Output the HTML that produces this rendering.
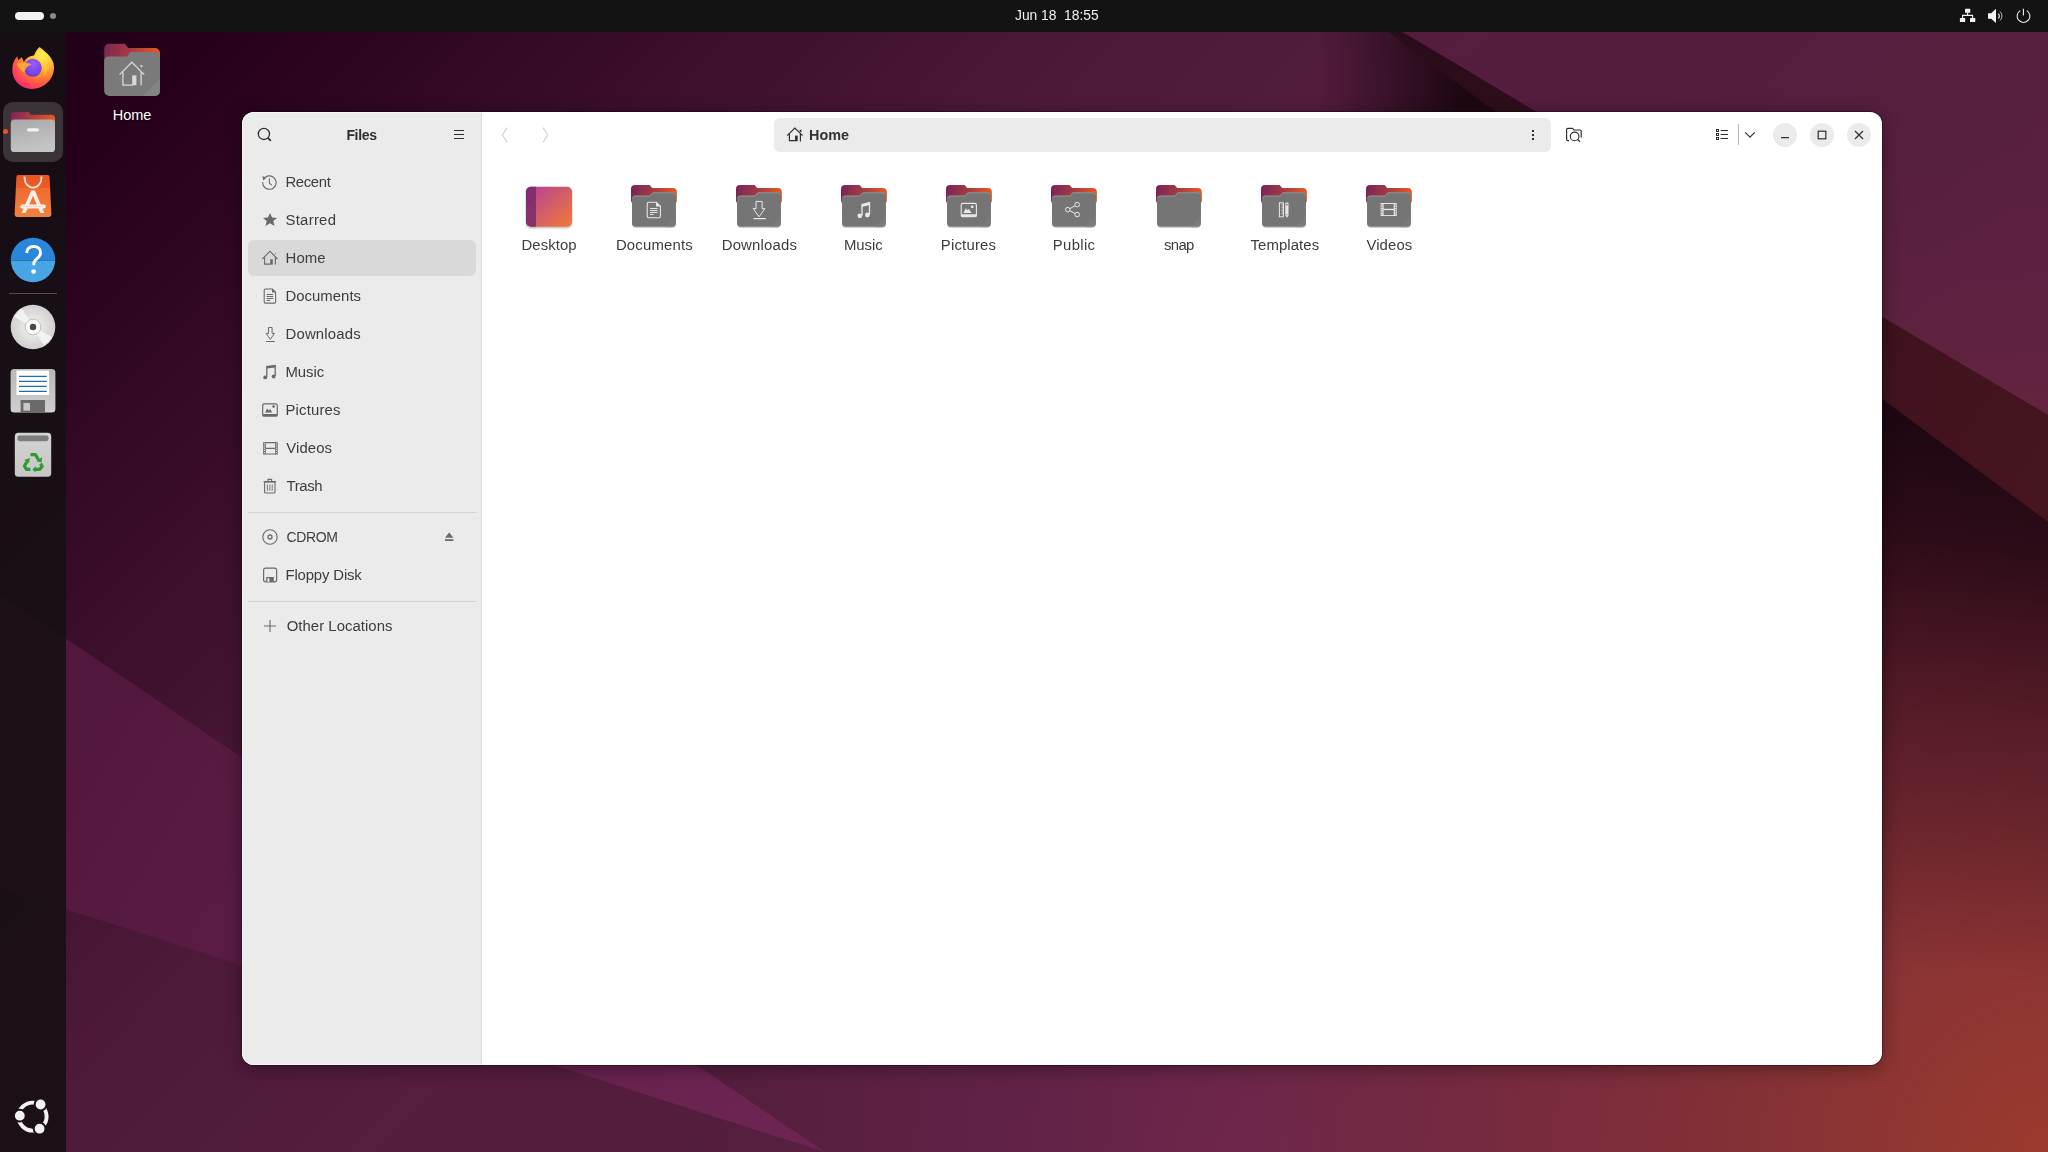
<!DOCTYPE html>
<html><head><meta charset="utf-8">
<style>
*{margin:0;padding:0;box-sizing:border-box}
html,body{width:2048px;height:1152px;overflow:hidden;background:#2a0520;font-family:"Liberation Sans",sans-serif;-webkit-font-smoothing:antialiased}
#win,#topbar{will-change:transform}
.abs{position:absolute}
#wall{position:absolute;left:0;top:0}
#topbar{position:absolute;left:0;top:0;width:2048px;height:32px;background:#131313}
#dock{position:absolute;left:0;top:32px;width:66px;height:1120px;background:rgba(22,15,21,0.9)}
#win{position:absolute;left:242px;top:112px;width:1640px;height:953px;border-radius:12px;background:#fff;overflow:hidden;
 box-shadow:0 0 0 1px rgba(0,0,0,0.3),0 3px 18px rgba(0,0,0,0.38)}
#side{position:absolute;left:0;top:0;width:240px;height:953px;background:#ebebeb;border-right:1px solid #d9d9d9}
#side .title{position:absolute;left:0;width:239px;top:124px}
.row{position:absolute;left:6px;width:228px;height:36px;border-radius:6px}
.row .ic{position:absolute;left:14px;top:10px;width:16px;height:16px}
.row .lb{position:absolute;left:37.5px;top:0;line-height:36px;font-size:14.5px;color:#3d3d3d;white-space:nowrap}
.sep{position:absolute;left:6px;width:228px;height:1px;background:#d2d2d2}
.item{position:absolute;top:0;width:105px;height:150px}
.item .lab{position:absolute;left:0;width:105px;text-align:center;top:123px;font-size:14.5px;color:#3d3d3d;line-height:20px}
.wb{width:24px;height:24px;border-radius:12px;background:#ebebeb}
.lab{width:120px;text-align:center;font-size:14.5px;color:#3d3d3d;line-height:20px;white-space:nowrap}
</style></head><body>
<svg id="wall" width="2048" height="1152" viewBox="0 0 2048 1152">
 <defs>
  <linearGradient id="g0" x1="0" y1="0" x2="1600" y2="1600" gradientUnits="userSpaceOnUse">
   <stop offset="0" stop-color="#1e0016"/>
   <stop offset="0.075" stop-color="#26001a"/>
   <stop offset="0.234" stop-color="#3c0f2c"/>
   <stop offset="0.36" stop-color="#4d1a3a"/>
   <stop offset="0.47" stop-color="#551d3e"/>
   <stop offset="0.656" stop-color="#531e3d"/>
   <stop offset="1" stop-color="#5a2140"/>
  </linearGradient>
  <radialGradient id="gred" cx="2048" cy="1152" r="1000" gradientUnits="userSpaceOnUse">
   <stop offset="0" stop-color="#9c3a2e" stop-opacity="1"/>
   <stop offset="0.25" stop-color="#9a3a30" stop-opacity="0.72"/>
   <stop offset="0.55" stop-color="#963632" stop-opacity="0.4"/>
   <stop offset="0.85" stop-color="#8a3038" stop-opacity="0.1"/>
   <stop offset="1" stop-color="#8a3038" stop-opacity="0"/>
  </radialGradient>
  <radialGradient id="gmag" cx="1250" cy="1152" r="540" gradientUnits="userSpaceOnUse">
   <stop offset="0" stop-color="#722852" stop-opacity="0.75"/>
   <stop offset="0.6" stop-color="#6e2650" stop-opacity="0.4"/>
   <stop offset="1" stop-color="#6e2650" stop-opacity="0"/>
  </radialGradient>
  <linearGradient id="gdark" x1="1960" y1="440" x2="1880" y2="960" gradientUnits="userSpaceOnUse">
   <stop offset="0" stop-color="#1a0610" stop-opacity="0.92"/>
   <stop offset="0.2" stop-color="#1e0610" stop-opacity="0.8"/>
   <stop offset="0.5" stop-color="#2a0812" stop-opacity="0.45"/>
   <stop offset="1" stop-color="#2a0810" stop-opacity="0"/>
  </linearGradient>
  <linearGradient id="gmask" x1="1320" y1="0" x2="1460" y2="0" gradientUnits="userSpaceOnUse">
   <stop offset="0" stop-color="#000"/>
   <stop offset="1" stop-color="#fff"/>
  </linearGradient>
  <mask id="mk" maskUnits="userSpaceOnUse" x="0" y="0" width="2048" height="1152">
   <rect width="2048" height="1152" fill="url(#gmask)"/>
  </mask>
  <linearGradient id="gband" x1="1400" y1="50" x2="2048" y2="470" gradientUnits="userSpaceOnUse">
   <stop offset="0" stop-color="#2a0c1a"/>
   <stop offset="1" stop-color="#46151f"/>
  </linearGradient>
  <linearGradient id="glight" x1="1700" y1="100" x2="2048" y2="420" gradientUnits="userSpaceOnUse">
   <stop offset="0" stop-color="#6a2745" stop-opacity="0"/>
   <stop offset="1" stop-color="#642542" stop-opacity="0.45"/>
  </linearGradient>
  <linearGradient id="gleft" x1="66" y1="700" x2="760" y2="1120" gradientUnits="userSpaceOnUse">
   <stop offset="0" stop-color="#52173d"/>
   <stop offset="1" stop-color="#6c2552"/>
  </linearGradient>
 </defs>
 <rect width="2048" height="1152" fill="url(#g0)"/>
 <rect width="2048" height="1152" fill="url(#gmag)"/>
 <rect width="2048" height="1152" fill="url(#gred)"/>
 <polygon points="1345,0 2048,0 2048,415" fill="url(#glight)"/>
 <polygon points="1349,0 2048,418 2048,1152 1000,1152 1000,0" fill="url(#gdark)" mask="url(#mk)"/>
 <polygon points="1344,-1 1346,-1 2048,415 2048,522" fill="url(#gband)"/>
 <polygon points="0,594 825,1152 0,888" fill="url(#gleft)"/>
</svg>
<div id="topbar">
 <div class="abs" style="left:15px;top:12px;width:29px;height:8px;border-radius:4px;background:#f2f2f2"></div>
 <div class="abs" style="left:50px;top:13px;width:6px;height:6px;border-radius:3px;background:#8a8a8a"></div>
 <div class="abs" style="left:1015px;top:7px;font-size:13.8px;color:#f2f2f2;line-height:18px;white-space:pre">Jun 18  18:55</div>
 <svg class="abs" style="left:1958px;top:7px" width="18" height="18" viewBox="0 0 18 18"><rect x="7" y="1.8" width="5.3" height="4" rx="0.6" fill="#f2f2f2"/><rect x="1.9" y="11" width="5.3" height="4" rx="0.6" fill="#f2f2f2"/><rect x="12" y="11" width="5.3" height="4" rx="0.6" fill="#f2f2f2"/><path fill="none" d="M9.6 5.6 V8.4 M4.6 11 V8.4 H14.6 V11" stroke="#f2f2f2" stroke-width="1.1"/></svg>
 <svg class="abs" style="left:1986px;top:7px" width="20" height="18" viewBox="0 0 20 18"><path d="M2.6 6.2 H5.2 L10 1.8 V16 L5.2 11.8 H2.6 A0.6 0.6 0 0 1 2 11.2 V6.8 A0.6 0.6 0 0 1 2.6 6.2Z" fill="#f2f2f2"/><path fill="none" d="M12.2 6.6 A3.4 3.4 0 0 1 12.2 11.4" stroke="#f2f2f2" stroke-width="1.1"/><path fill="none" d="M14.2 4.6 A6.4 6.4 0 0 1 14.2 13.4" stroke="#cfcfcf" stroke-width="0.9"/></svg>
 <svg class="abs" style="left:2015px;top:7px" width="18" height="18" viewBox="0 0 18 18"><path fill="none" d="M5.2 3.6 A6.4 6.4 0 1 0 11.8 3.6" stroke="#f2f2f2" stroke-width="1.1"/><path fill="none" d="M8.4 1.8 V8.6" stroke="#f2f2f2" stroke-width="1.1"/></svg>
</div>
<div id="dock">
 <svg class="abs" style="left:10px;top:13px" width="46" height="46" viewBox="0 0 46 46">
  <defs>
   <radialGradient id="ffo" cx="0.72" cy="0.2" r="1"><stop offset="0" stop-color="#fff44f"/><stop offset="0.35" stop-color="#ffb02e"/><stop offset="0.6" stop-color="#ff6a38"/><stop offset="0.85" stop-color="#ff2f6a"/><stop offset="1" stop-color="#e3137c"/></radialGradient>
   <radialGradient id="ffp" cx="0.55" cy="0.3" r="0.8"><stop offset="0" stop-color="#9b5cff"/><stop offset="0.7" stop-color="#7542e5"/><stop offset="1" stop-color="#4a3bc8"/></radialGradient>
  </defs>
  <path d="M29.6 2 C34 6 41 10 43.4 18 C46 28 40 40.5 26 43.6 C13 46 2.5 37 2.3 25 C2.2 19 4 14.6 7.3 11.2 L8.1 15.3 L11.8 12.3 L13.9 17 C16 13 20 11 24 10.6 C25.5 6.4 27.4 4 29.6 2Z" fill="url(#ffo)"/>
  <circle cx="22.8" cy="22.8" r="9" fill="url(#ffp)"/>
  <path d="M7 18.6 C11 16.8 18 17.2 21.6 19.8 C17 21 14.4 24 14.8 28 C11 25.6 8 22.6 7 18.6Z" fill="#ffb02e" opacity="0.9"/>
  <path d="M32 18 C35 22 35.5 28 33 33 C36 30 37.6 25 36 20.5Z" fill="#ffd23a" opacity="0.6"/>
 </svg>
 <div class="abs" style="left:3px;top:70px;width:60px;height:60px;border-radius:10px;background:#3b3337"></div>
 <div class="abs" style="left:3px;top:97px;width:5px;height:5px;border-radius:3px;background:#e95420"></div>
 <svg class="abs" style="left:10px;top:79px" width="46" height="42" viewBox="0 0 46 42">
  <defs><linearGradient id="gfback" x1="0" y1="0" x2="1" y2="0.3"><stop offset="0" stop-color="#7a2358"/><stop offset="1" stop-color="#ea5a22"/></linearGradient>
  <linearGradient id="gffront" x1="0" y1="0" x2="0.3" y2="1"><stop offset="0" stop-color="#a8a8a8"/><stop offset="1" stop-color="#c4c4c4"/></linearGradient></defs>
  <path d="M0.8 4.6 A3.6 3.6 0 0 1 4.4 1 H18.6 L21 3.8 H41.4 A3.6 3.6 0 0 1 45 7.4 V30 H0.8Z" fill="url(#gfback)"/>
  <path d="M0.8 12.2 A3.6 3.6 0 0 1 4.4 8.6 H41.4 A3.6 3.6 0 0 1 45 12.2 V37.4 A3.6 3.6 0 0 1 41.4 41 H4.4 A3.6 3.6 0 0 1 0.8 37.4Z" fill="url(#gffront)"/>
  <rect x="17" y="17.2" width="12" height="3.2" rx="1.6" fill="#f4f4f4"/>
 </svg>
 <svg class="abs" style="left:14px;top:142px" width="38" height="44" viewBox="0 0 38 44">
  <defs><linearGradient id="gac" x1="0" y1="0" x2="0" y2="1"><stop offset="0" stop-color="#e95420"/><stop offset="0.3" stop-color="#ec5d26"/><stop offset="0.32" stop-color="#f06c30"/><stop offset="1" stop-color="#f2813e"/></linearGradient></defs>
  <path d="M4.4 1 H33.6 A2 2 0 0 1 35.6 3 L37.4 40.6 A2.4 2.4 0 0 1 35 43 H3 A2.4 2.4 0 0 1 0.6 40.6 L2.4 3 A2 2 0 0 1 4.4 1Z" fill="url(#gac)"/>
  <path fill="none" d="M10.6 2.6 V4.2 A8.4 9.4 0 0 0 27.4 4.2 V2.6" stroke="#f6e6de" stroke-width="1.9"/>
  <path d="M17.2 16.4 H20.8 L30.4 39 H26.4 L19 21.8 L11.6 39 H7.6 Z" fill="#fdf0e8"/>
  <rect x="6.2" y="30.4" width="25.6" height="4.2" rx="2.1" fill="#fdf0e8"/><path d="M8.4 32.5 H29.6" stroke="#f7b9a4" stroke-width="0.5"/>
 </svg>
 <svg class="abs" style="left:10px;top:205px" width="46" height="46" viewBox="0 0 46 46">
  <defs><clipPath id="hc"><circle cx="23" cy="23" r="22.2"/></clipPath></defs>
  <g clip-path="url(#hc)"><rect x="0" y="0" width="46" height="23.6" fill="#2a86da"/><rect x="0" y="23.6" width="46" height="23" fill="#47a5e6"/></g>
  <path fill="none" d="M16.6 16 C17 11.6 20 9.6 23.8 9.6 C27.6 9.6 30.6 12 30.6 15.6 C30.6 19.4 27.6 20.8 25.4 23 C24.2 24.2 23.8 25.4 23.8 28.2" stroke="#ffffff" stroke-width="3"/>
  <circle cx="23.6" cy="34.6" r="2.4" fill="#ffffff"/>
 </svg>
 <div class="abs" style="left:9px;top:261px;width:48px;height:1px;background:#554d52"></div>
 <svg class="abs" style="left:10px;top:272px" width="46" height="46" viewBox="0 0 46 46">
  <defs><radialGradient id="gcd" cx="0.5" cy="0.5" r="0.5"><stop offset="0" stop-color="#f4f4f4"/><stop offset="1" stop-color="#d0d0d0"/></radialGradient></defs>
  <circle cx="23" cy="23" r="22.3" fill="url(#gcd)"/>
  <path d="M23 23 L4 13 A22 22 0 0 1 12 4.4Z" fill="#f8f8f8" opacity="0.8"/>
  <path d="M23 23 L42 33 A22 22 0 0 1 34 41.6Z" fill="#f8f8f8" opacity="0.8"/>
  <circle cx="23" cy="23" r="7.8" fill="#fafafa" stroke="#b79f7e" stroke-width="0.6"/>
  <circle cx="23" cy="23" r="3.2" fill="#4a4a4a"/>
 </svg>
 <svg class="abs" style="left:10px;top:336px" width="46" height="46" viewBox="0 0 46 46">
  <defs><linearGradient id="gfl" x1="0" y1="0" x2="0" y2="1"><stop offset="0" stop-color="#b8b8b8"/><stop offset="1" stop-color="#cfcfcf"/></linearGradient></defs>
  <path d="M4.2 1 H41.8 A3.6 3.6 0 0 1 45.4 4.6 V41 A3.6 3.6 0 0 1 41.8 44.6 H4.2 A3.6 3.6 0 0 1 0.6 41 V4.6 A3.6 3.6 0 0 1 4.2 1Z" fill="url(#gfl)"/>
  <rect x="6.5" y="2.6" width="32.6" height="24.4" fill="#ffffff"/>
  <path fill="none" d="M9 8.4h27.8M9 13.4h27.8M9 18.4h27.8M9 23.4h27.8" stroke="#1f6fae" stroke-width="1.1"/>
  <rect x="10.6" y="32" width="24.4" height="12.6" fill="#6a6a6a"/>
  <rect x="13.4" y="35" width="6.6" height="7.6" fill="#c8c8c8"/>
 </svg>
 <svg class="abs" style="left:14px;top:400px" width="38" height="46" viewBox="0 0 38 46">
  <defs><linearGradient id="gtr" x1="0" y1="0" x2="0" y2="1"><stop offset="0" stop-color="#d4d4d4"/><stop offset="1" stop-color="#c6c6c6"/></linearGradient></defs>
  <rect x="0.8" y="0.8" width="36.4" height="44" rx="3.6" fill="url(#gtr)"/>
  <rect x="3.4" y="3.6" width="31.2" height="5.6" rx="2.4" fill="#7d7d7d"/>
  <g fill="none" stroke="#2f9a2f" stroke-width="3.2" stroke-linejoin="round"><path d="M16.6 22.6 L21.4 22.6 L24.6 28" /><path d="M26.6 31.4 L28.2 34.4 L25.6 37.4 L20.6 37.4"/><path d="M16.4 37.4 L12.4 37.4 L10.4 34 L13 29.6"/></g>
  <g fill="#2f9a2f"><path d="M22.4 29.4 L27.6 30.2 L28.2 25Z"/><path d="M21.6 34.2 L18.4 37.4 L21.6 40.6Z"/><path d="M10.4 28 L15 31 L15.8 26Z"/></g>
 </svg>
 <svg class="abs" style="left:0px;top:1054px" width="66" height="60" viewBox="0 0 66 60">
  <circle cx="32.6" cy="30.6" r="14" fill="none" stroke="#f2f2f2" stroke-width="3.9"/>
  <circle cx="19.8" cy="29.7" r="5.9" fill="#f2f2f2" stroke="#1c1218" stroke-width="2"/>
  <circle cx="40.6" cy="18.5" r="5.9" fill="#f2f2f2" stroke="#1c1218" stroke-width="2"/>
  <circle cx="39.6" cy="42.7" r="5.9" fill="#f2f2f2" stroke="#1c1218" stroke-width="2"/>
 </svg>
</div>
<div class="abs" style="left:103px;top:43px;width:58px;height:54px">
 <svg width="58" height="54" viewBox="0 0 58 54">
  <defs><linearGradient id="ghback" x1="0" y1="0" x2="56" y2="14" gradientUnits="userSpaceOnUse"><stop offset="0" stop-color="#7a2452"/><stop offset="0.5" stop-color="#a63b42"/><stop offset="1" stop-color="#ea5a22"/></linearGradient></defs>
  <path d="M1.2 5.8 A5 5 0 0 1 6.2 0.8 H22 L25.2 5 H52 A5 5 0 0 1 57 10 V45 H1.2Z" fill="url(#ghback)"/>
  <path d="M1.2 17.6 A4.2 4.2 0 0 1 5.4 13.4 H24 L27.4 9 H52.8 A4.2 4.2 0 0 1 57 13.2 V48 A5 5 0 0 1 52 53 H6.2 A5 5 0 0 1 1.2 48Z" fill="#7a7a7a"/>
  <path d="M57 35 V48 A5 5 0 0 1 52 53 H40Z" fill="#888" opacity="0.7"/>
  <path fill="none" d="M16.6 31.6 L28.8 19.2 L41.2 31.6" stroke="#d8d8d8" stroke-width="1.3"/>
  <path fill="none" d="M19.9 28.4 V42.2 H30 M38.1 28.8 V42.6" stroke="#d8d8d8" stroke-width="1.3"/>
  <rect x="29.2" y="32.4" width="4.2" height="9.8" fill="#d8d8d8"/>
  <path d="M36.6 22.6 L39.6 22 L39 25Z" fill="#d8d8d8"/>
 </svg>
</div>
<div class="abs" style="left:72px;top:105px;width:120px;text-align:center;font-size:14.5px;line-height:20px;color:#fff;text-shadow:0 1px 2px rgba(0,0,0,0.8)">Home</div>
<div id="win">
<svg width="0" height="0" style="position:absolute"><defs>
 <linearGradient id="gback" x1="0" y1="0" x2="46" y2="12" gradientUnits="userSpaceOnUse"><stop offset="0" stop-color="#74235a"/><stop offset="0.5" stop-color="#a53a42"/><stop offset="1" stop-color="#ea5a22"/></linearGradient>
 <filter id="fsh2" x="-20%" y="-20%" width="140%" height="150%"><feDropShadow dx="0" dy="1" stdDeviation="0.7" flood-color="#000" flood-opacity="0.4"/></filter>
 <g id="fold"><g filter="url(#fsh2)">
  <path d="M1 5 A4 4 0 0 1 5 1 H19.6 L22.2 4.1 H42.8 A4 4 0 0 1 46.8 8.1 V17.5 H1Z" fill="url(#gback)"/>
  <path d="M2 15 A3.4 3.4 0 0 1 5.4 11.6 H19.8 L22.7 8.3 H42.5 A3.4 3.4 0 0 1 45.9 11.7 V38.5 A4 4 0 0 1 41.9 42.5 H6 A4 4 0 0 1 2 38.5Z" fill="#747474"/>
  <path d="M45.9 31.5 V38.5 A4 4 0 0 1 41.9 42.5 H35.5Z" fill="#808080" opacity="0.5"/>
  <path fill="none" d="M2.5 14.2 A3 3 0 0 1 5.4 12.1 H20 L22.9 8.8 H42.5 A3 3 0 0 1 45.4 10.8" stroke="#90999a" stroke-width="0.9"/>
 </g></g>
</defs></svg>
 <div id="content" class="abs" style="left:0;top:0;width:1640px;height:953px">
 <svg class="abs" style="left:258px;top:14px" width="10" height="18" viewBox="0 0 10 18"><path fill="none" d="M7.2 1.6 L2.4 9 L7.2 16.4" stroke="#d2d2d2" stroke-width="1.1"/></svg>
 <svg class="abs" style="left:299px;top:14px" width="10" height="18" viewBox="0 0 10 18"><path fill="none" d="M2 1.6 L6.8 9 L2 16.4" stroke="#d2d2d2" stroke-width="1.1"/></svg>
 <div class="abs" style="left:532px;top:6px;width:777px;height:34px;border-radius:6px;background:#ebebeb"></div>
 <svg class="abs" style="left:544px;top:15px" width="18" height="16" viewBox="0 0 18 16"><path fill="none" d="M1.2 8.6 L8.8 1 L16.6 8.6" stroke="#2e2e2e" stroke-width="1.15"/><path fill="none" d="M3.4 6.6 V13.6 H9.6 M14.4 6.8 V14.4" stroke="#2e2e2e" stroke-width="1.15"/><rect x="9.1" y="8.6" width="2.6" height="5.6" fill="#2e2e2e"/><path d="M13 3.8 L15.4 2.2 L15.4 5.4Z" fill="#2e2e2e"/></svg>
 <div class="abs" style="left:567px;top:13px;font-weight:bold;font-size:14.4px;color:#333;line-height:20px">Home</div>
 <svg class="abs" style="left:1289px;top:17px" width="4" height="12" viewBox="0 0 4 12"><rect x="1" y="1" width="2" height="2" fill="#2e2e2e"/><rect x="1" y="5" width="2" height="2" fill="#2e2e2e"/><rect x="1" y="9" width="2" height="2" fill="#2e2e2e"/></svg>
 <svg class="abs" style="left:1323px;top:15px" width="18" height="18" viewBox="0 0 18 18"><path fill="none" d="M4.2 13.6 H3 A1.4 1.4 0 0 1 1.6 12.2 V2.6 A1.2 1.2 0 0 1 2.8 1.4 H7.4 L9 3 H15 A1.2 1.2 0 0 1 16.2 4.2 V10.4" stroke="#2e2e2e" stroke-width="1.15"/><circle cx="9.6" cy="9.4" r="4.3" fill="none" stroke="#2e2e2e" stroke-width="1.15"/><path fill="none" d="M12.6 12.4 L15 14.8" stroke="#2e2e2e" stroke-width="1.3"/></svg>
 <svg class="abs" style="left:1473px;top:16px" width="14" height="14" viewBox="0 0 14 14"><rect x="1.5" y="1.5" width="2" height="2" fill="none" stroke="#2e2e2e" stroke-width="1"/><rect x="1.5" y="5.5" width="2" height="2" fill="none" stroke="#2e2e2e" stroke-width="1"/><rect x="1.5" y="9.5" width="2" height="2" fill="none" stroke="#2e2e2e" stroke-width="1"/><path fill="none" d="M5.6 2.5 H13 M5.6 6.5 H13 M5.6 10.5 H13" stroke="#2e2e2e" stroke-width="1"/></svg>
 <div class="abs" style="left:1496px;top:12px;width:1px;height:21px;background:#b8b8b8"></div>
 <svg class="abs" style="left:1502px;top:19px" width="12" height="8" viewBox="0 0 12 8"><path fill="none" d="M1.2 1.4 L6 6.2 L10.8 1.4" stroke="#2e2e2e" stroke-width="1.1"/></svg>
 <div class="abs wb" style="left:1531px;top:11px"><svg width="24" height="24" viewBox="0 0 24 24"><path fill="none" d="M8 14.7 H16" stroke="#2e2e2e" stroke-width="1.2"/></svg></div>
 <div class="abs wb" style="left:1568px;top:11px"><svg width="24" height="24" viewBox="0 0 24 24"><rect x="8.2" y="8.2" width="7.6" height="7.6" fill="none" stroke="#2e2e2e" stroke-width="1.2"/></svg></div>
 <div class="abs wb" style="left:1605px;top:11px"><svg width="24" height="24" viewBox="0 0 24 24"><path fill="none" d="M8 8 L16 16 M16 8 L8 16" stroke="#2e2e2e" stroke-width="1.2"/></svg></div>
 <div class="abs" style="left:283px;top:72px;width:48px;height:46px"><svg width="48" height="46" viewBox="0 0 48 46"><defs><linearGradient id="gdesk" x1="0" y1="0" x2="1" y2="1"><stop offset="0" stop-color="#b23f9c"/><stop offset="0.45" stop-color="#cf5a6c"/><stop offset="1" stop-color="#f27a38"/></linearGradient><filter id="fsh" x="-20%" y="-20%" width="140%" height="150%"><feDropShadow dx="0" dy="1" stdDeviation="0.8" flood-color="#000" flood-opacity="0.35"/></filter></defs><g filter="url(#fsh)"><rect x="1" y="2.8" width="46" height="40" rx="5" fill="url(#gdesk)"/><path d="M6 2.8 H11 V42.8 H6 A5 5 0 0 1 1 37.8 V7.8 A5 5 0 0 1 6 2.8Z" fill="#7a2a6a" opacity="0.85"/></g></svg></div><div class="abs lab" style="left:247.10px;top:123.4px;font-size:14.9px;letter-spacing:0.087px">Desktop</div>
 <div class="abs" style="left:388px;top:72px;width:48px;height:46px"><svg width="48" height="46" viewBox="0 0 48 46"><use href="#fold"/><g transform="translate(1 1.2)"><path fill="none" d="M17.2 17 H25.4 L29.4 21 V31 A1.6 1.6 0 0 1 27.8 32.6 H17.8 A1.6 1.6 0 0 1 16.2 31 V18.6 A1.6 1.6 0 0 1 17.8 17Z" stroke="#e8e8e8" stroke-width="1.1"/><path d="M25 16.8 L29.6 21.4 H25Z" fill="#e8e8e8"/><path fill="none" d="M19 23.3h7.6M19 25.3h7.6M19 27.3h7.6M19 29.3h3.6" stroke="#e8e8e8" stroke-width="1"/></g></svg></div><div class="abs lab" style="left:352.40px;top:123.4px;font-size:14.9px;letter-spacing:0.189px">Documents</div>
 <div class="abs" style="left:493px;top:72px;width:48px;height:46px"><svg width="48" height="46" viewBox="0 0 48 46"><use href="#fold"/><g transform="translate(1 1.2)"><path fill="none" d="M20 16.2 H26.1 V23.4 H28.9 L23.05 31.6 L17.2 23.4 H20Z" stroke="#e8e8e8" stroke-width="1"/><path fill="none" d="M17.5 33.4 H29.8" stroke="#e8e8e8" stroke-width="1.1"/></g></svg></div><div class="abs lab" style="left:457.40px;top:123.4px;font-size:14.9px;letter-spacing:0.189px">Downloads</div>
 <div class="abs" style="left:598px;top:72px;width:48px;height:46px"><svg width="48" height="46" viewBox="0 0 48 46"><use href="#fold"/><g transform="translate(1 1.2)"><path fill="none" d="M21 30.4 V19.2 L28.5 17.3 V29.2" stroke="#e8e8e8" stroke-width="1.3"/><path d="M21 19.2 L28.5 17.3 V19.8 L21 21.7Z" fill="#e8e8e8"/><circle cx="18.8" cy="30.6" r="2.4" fill="#e8e8e8"/><circle cx="26.4" cy="29.8" r="2.4" fill="#e8e8e8"/></g></svg></div><div class="abs lab" style="left:561.30px;top:123.4px;font-size:14.9px;letter-spacing:-0.040px">Music</div>
 <div class="abs" style="left:703px;top:72px;width:48px;height:46px"><svg width="48" height="46" viewBox="0 0 48 46"><use href="#fold"/><g transform="translate(1 1.2)"><rect x="15.2" y="18.2" width="15.2" height="13.4" rx="1.6" fill="none" stroke="#e8e8e8" stroke-width="1.1"/><rect x="15" y="29" width="15.6" height="2.8" rx="1" fill="#e8e8e8"/><path d="M17.4 27.9 L19.8 23 L21.4 25 L22.8 23.8 L25.8 27.9Z" fill="#e8e8e8"/><circle cx="26.2" cy="21.6" r="1.4" fill="#e8e8e8"/></g></svg></div><div class="abs lab" style="left:666.50px;top:123.4px;font-size:14.9px;letter-spacing:0.200px">Pictures</div>
 <div class="abs" style="left:808px;top:72px;width:48px;height:46px"><svg width="48" height="46" viewBox="0 0 48 46"><use href="#fold"/><g transform="translate(1 1.2)"><circle cx="16.8" cy="24.5" r="2.3" fill="none" stroke="#e8e8e8" stroke-width="1"/><circle cx="26.2" cy="19.4" r="2.3" fill="none" stroke="#e8e8e8" stroke-width="1"/><circle cx="26.2" cy="29.4" r="2.3" fill="none" stroke="#e8e8e8" stroke-width="1"/><path fill="none" d="M18.8 23.4 L24.2 20.5 M18.8 25.6 L24.2 28.3" stroke="#e8e8e8" stroke-width="1"/></g></svg></div><div class="abs lab" style="left:772.10px;top:123.4px;font-size:14.9px;letter-spacing:0.317px">Public</div>
 <div class="abs" style="left:913px;top:72px;width:48px;height:46px"><svg width="48" height="46" viewBox="0 0 48 46"><use href="#fold"/><g transform="translate(1 1.2)"></g></svg></div><div class="abs lab" style="left:876.80px;top:123.4px;font-size:14.9px;letter-spacing:-0.675px">snap</div>
 <div class="abs" style="left:1018px;top:72px;width:48px;height:46px"><svg width="48" height="46" viewBox="0 0 48 46"><use href="#fold"/><g transform="translate(1 1.2)"><rect x="18.4" y="17.6" width="4" height="14" fill="none" stroke="#e8e8e8" stroke-width="1"/><path fill="none" d="M20.4 19.5h2M21.2 21h1.2M20.4 22.5h2M21.2 24h1.2M20.4 25.5h2M21.2 27h1.2M20.4 28.5h2" stroke="#e8e8e8" stroke-width="0.7"/><path d="M24.3 18.6 A1.3 1.3 0 0 1 25.6 17.3 H26.2 A1.3 1.3 0 0 1 27.5 18.6 V30.2 L25.9 32.6 L24.3 30.2Z" fill="#e8e8e8"/><rect x="25.2" y="18.6" width="1.4" height="1.6" fill="#737373"/><path d="M24.6 29.6 H27.2" stroke="#8a8a8a" stroke-width="0.6"/></g></svg></div><div class="abs lab" style="left:982.90px;top:123.4px;font-size:14.9px;letter-spacing:0.078px">Templates</div>
 <div class="abs" style="left:1123px;top:72px;width:48px;height:46px"><svg width="48" height="46" viewBox="0 0 48 46"><use href="#fold"/><g transform="translate(1 1.2)"><path d="M14.6 17.8 H30.7 V30.9 H14.6Z" fill="#e8e8e8"/><rect x="17.6" y="18.8" width="10.1" height="4.8" fill="#747474"/><rect x="17.6" y="24.9" width="10.1" height="5" fill="#747474"/><path d="M15.9 19.4v1.2M15.9 21.6v1.2M15.9 23.8v1.2M15.9 26v1.2M15.9 28.2v1.2M29.4 19.4v1.2M29.4 21.6v1.2M29.4 23.8v1.2M29.4 26v1.2M29.4 28.2v1.2" stroke="#747474" stroke-width="1.1"/></g></svg></div><div class="abs lab" style="left:1087.40px;top:123.4px;font-size:14.9px;letter-spacing:0.116px">Videos</div>
 </div>
 <div id="side">
  <svg class="abs" style="left:14px;top:14px" width="16" height="16" viewBox="0 0 16 16"><circle cx="7.9" cy="7.9" r="5.6" fill="none" stroke="#2e2e2e" stroke-width="1.3"/><path fill="none" d="M11.9 11.9 L14.8 14.8" stroke="#2e2e2e" stroke-width="1.8"/></svg>
  <div class="abs" style="left:0;width:239px;top:112px;"></div>
  <div class="abs" style="left:0;top:13px;width:239px;text-align:center;font-weight:bold;font-size:14px;letter-spacing:-0.35px;color:#2e2e2e;line-height:20px">Files</div>
  <svg class="abs" style="left:211px;top:16px" width="12" height="12" viewBox="0 0 12 12"><path fill="none" d="M1 2.5h10M1 6.5h10M1 10.5h10" stroke="#2e2e2e" stroke-width="1.2"/></svg>
  <div class="row" style="top:52px;"><svg class="ic" width="16" height="16" viewBox="0 0 16 16"><path fill="none" d="M3.4 3.2 A6.7 6.7 0 1 1 0.7 8" stroke="#6a6a6a" stroke-width="1.1"/><path d="M0.3 2.2 L4.6 3.4 L1.2 6.6Z" fill="#6a6a6a"/><path fill="none" d="M7.4 4.4 V9.2 L9.8 11.2" stroke="#6a6a6a" stroke-width="1.1"/></svg><div class="lb" style="font-size:14.9px;margin-left:0.00px;letter-spacing:-0.380px">Recent</div></div>
  <div class="row" style="top:90px;"><svg class="ic" width="16" height="16" viewBox="0 0 16 16"><path d="M8 0.9 L10.1 5.6 L15 5.9 L11.3 9.1 L12.5 14 L8 11.3 L3.5 14 L4.7 9.1 L1 5.9 L5.9 5.6 Z" fill="#6a6a6a"/></svg><div class="lb" style="font-size:14.9px;margin-left:0.00px;letter-spacing:0.267px">Starred</div></div>
  <div class="row" style="top:128px;background:#d9d9d9;"><svg class="ic" width="16" height="16" viewBox="0 0 16 16"><path d="M0.3 9 L7.9 1.2 L15.5 9" fill="none" stroke="#6a6a6a" stroke-width="1.1"/><path d="M2.6 7.2 V14.1 H8.5 M13.4 7.4 V14.6" fill="none" stroke="#6a6a6a" stroke-width="1.1"/><rect x="8.2" y="9.2" width="2.6" height="5.4" fill="#6a6a6a"/><path d="M12.6 3.4 L14 3 L13.6 4.6Z" fill="#6a6a6a"/></svg><div class="lb" style="font-size:14.9px;margin-left:0.00px;letter-spacing:0.134px">Home</div></div>
  <div class="row" style="top:166px;"><svg class="ic" width="16" height="16" viewBox="0 0 16 16"><path d="M3.2 1 H10.5 L13.6 4.2 V14.1 A1 1 0 0 1 12.6 15.1 H3.2 A1 1 0 0 1 2.2 14.1 V2 A1 1 0 0 1 3.2 1Z" fill="none" stroke="#6a6a6a" stroke-width="1.1"/><path d="M10 0.8 L13.8 4.6 H10Z" fill="#6a6a6a"/><path fill="none" d="M4.6 6.5h6.6M4.6 8.5h6.6M4.6 10.5h6.6M4.6 12.5h3.6" stroke="#6a6a6a" stroke-width="1"/></svg><div class="lb" style="font-size:14.9px;margin-left:0.00px;letter-spacing:0.025px">Documents</div></div>
  <div class="row" style="top:204px;"><svg class="ic" width="16" height="16" viewBox="0 0 16 16"><path d="M6.5 1.5 H10.1 V7.4 H12.4 L8.3 13.4 L4.2 7.4 H6.5Z" fill="none" stroke="#6a6a6a" stroke-width="1"/><path fill="none" d="M3.9 15.5 H12.8" stroke="#6a6a6a" stroke-width="1"/></svg><div class="lb" style="font-size:14.9px;margin-left:0.00px;letter-spacing:0.189px">Downloads</div></div>
  <div class="row" style="top:242px;"><svg class="ic" width="16" height="16" viewBox="0 0 16 16"><path d="M4.8 13 V2.6 L13.2 1.6 V12" fill="none" stroke="#6a6a6a" stroke-width="1.3"/><path d="M4.8 2.6 L13.2 1.6 V3.6 L4.8 4.6Z" fill="#6a6a6a"/><circle cx="3.2" cy="13.4" r="1.9" fill="#6a6a6a"/><circle cx="11.6" cy="12.5" r="1.9" fill="#6a6a6a"/></svg><div class="lb" style="font-size:14.9px;margin-left:0.00px;letter-spacing:-0.075px">Music</div></div>
  <div class="row" style="top:280px;"><svg class="ic" width="16" height="16" viewBox="0 0 16 16"><rect x="0.7" y="1.8" width="14.6" height="12.2" rx="1.6" fill="none" stroke="#6a6a6a" stroke-width="1.2"/><rect x="0.7" y="12" width="14.6" height="2.4" rx="1" fill="#6a6a6a"/><path d="M3 10.6 L5.2 6.4 L6.8 8.4 L8.2 6.9 L10.2 10.6Z" fill="#6a6a6a"/><circle cx="11.6" cy="4.6" r="1.3" fill="#6a6a6a"/></svg><div class="lb" style="font-size:14.9px;margin-left:0.00px;letter-spacing:0.171px">Pictures</div></div>
  <div class="row" style="top:318px;"><svg class="ic" width="16" height="16" viewBox="0 0 16 16"><rect x="1.2" y="2.1" width="2.6" height="12.5" fill="#6a6a6a"/><rect x="13.1" y="2.1" width="2.6" height="12.5" fill="#6a6a6a"/><path fill="none" d="M3.8 2.65 H13.1 M3.8 8.35 H13.1 M3.8 14.05 H13.1" stroke="#6a6a6a" stroke-width="1.1"/><rect x="2" y="3.3" width="1" height="1.1" fill="#ebebeb"/><rect x="13.9" y="3.3" width="1" height="1.1" fill="#ebebeb"/><rect x="2" y="5.5" width="1" height="1.1" fill="#ebebeb"/><rect x="13.9" y="5.5" width="1" height="1.1" fill="#ebebeb"/><rect x="2" y="7.7" width="1" height="1.1" fill="#ebebeb"/><rect x="13.9" y="7.7" width="1" height="1.1" fill="#ebebeb"/><rect x="2" y="9.9" width="1" height="1.1" fill="#ebebeb"/><rect x="13.9" y="9.9" width="1" height="1.1" fill="#ebebeb"/><rect x="2" y="12.1" width="1" height="1.1" fill="#ebebeb"/><rect x="13.9" y="12.1" width="1" height="1.1" fill="#ebebeb"/></svg><div class="lb" style="font-size:14.9px;margin-left:0.80px;letter-spacing:0.080px">Videos</div></div>
  <div class="row" style="top:356px;"><svg class="ic" width="16" height="16" viewBox="0 0 16 16"><rect x="2.6" y="4" width="10.4" height="11" rx="1" fill="none" stroke="#6a6a6a" stroke-width="1.1"/><path d="M1.6 3.6 H14 M6 3.6 V1.4 H9.6 V3.6" fill="none" stroke="#6a6a6a" stroke-width="1.1"/><path fill="none" d="M5.4 6.4 V12.8 M7.8 6.4 V12.8 M10.2 6.4 V12.8" stroke="#6a6a6a" stroke-width="0.9"/></svg><div class="lb" style="font-size:14.9px;margin-left:1.00px;letter-spacing:-0.350px">Trash</div></div>
  <div class="sep" style="top:400px"></div>
  <div class="row" style="top:407px;"><svg class="ic" width="16" height="16" viewBox="0 0 16 16"><circle cx="8" cy="8" r="7.2" fill="none" stroke="#6a6a6a" stroke-width="1.1"/><circle cx="8" cy="8" r="2" fill="none" stroke="#6a6a6a" stroke-width="1.3"/></svg><div class="lb" style="font-size:14px;margin-left:1.00px;letter-spacing:-0.37px">CDROM</div><svg class="abs" style="left:196.5px;top:13px" width="9" height="10" viewBox="0 0 9 10"><path d="M4.2 0.4 L8.4 5.8 H0Z" fill="#6a6a6a"/><rect x="0" y="7.2" width="8.4" height="1.8" fill="#6a6a6a"/></svg></div>
  <div class="row" style="top:445px;"><svg class="ic" width="16" height="16" viewBox="0 0 16 16"><rect x="1.6" y="1.2" width="13" height="13.6" rx="2" fill="none" stroke="#6a6a6a" stroke-width="1.2"/><path d="M4.2 14.8 V10 H11.8 V14.8" fill="#6a6a6a"/><rect x="5.4" y="11.2" width="2" height="3.6" fill="#ebebeb"/></svg><div class="lb" style="font-size:14.9px;margin-left:0.00px;letter-spacing:-0.150px">Floppy Disk</div></div>
  <div class="sep" style="top:489px"></div>
  <div class="row" style="top:496px;"><svg class="ic" width="16" height="16" viewBox="0 0 16 16"><path fill="none" d="M8 2 V14 M2 8 H14" stroke="#6a6a6a" stroke-width="1.1"/></svg><div class="lb" style="font-size:14.9px;margin-left:1.20px;letter-spacing:0.043px">Other Locations</div></div>
</div>
<div class="abs" style="left:0;top:0;width:1640px;height:953px;border-radius:12px;box-shadow:inset 0 0 0 1px rgba(255,255,255,0.55);pointer-events:none"></div>
</div>
</body></html>
